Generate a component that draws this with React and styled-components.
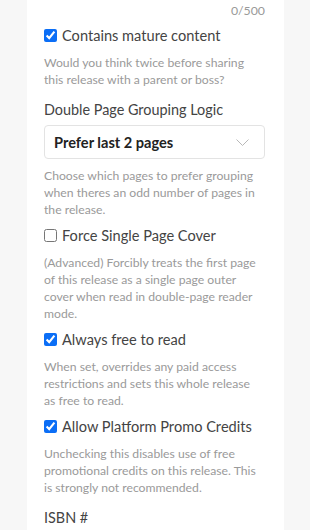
import React, { useState } from "react";
import styled, { createGlobalStyle } from "styled-components";

const GlobalStyle = createGlobalStyle`
  body {
    margin: 0;
    background: #f7f7f7;
    font-family: Lato, "Liberation Sans", sans-serif;
  }
`;

const options = [
  {
    id: "mature",
    label: "Contains mature content",
    checked: true,
    help: "Would you think twice before sharing this release with a parent or boss?",
  },
];

const afterSelect = [
  {
    id: "cover",
    label: "Force Single Page Cover",
    checked: false,
    help: "(Advanced) Forcibly treats the first page of this release as a single page outer cover when read in double-page reader mode.",
  },
  {
    id: "free",
    label: "Always free to read",
    checked: true,
    help: "When set, overrides any paid access restrictions and sets this whole release as free to read.",
  },
  {
    id: "promo",
    label: "Allow Platform Promo Credits",
    checked: true,
    help: "Unchecking this disables use of free promotional credits on this release. This is strongly not recommended.",
  },
];

function CheckOption({ label, help, defaultChecked }) {
  const [checked, setChecked] = useState(defaultChecked);
  return (
    <Group>
      <CheckRow>
        <CheckInput
          type="checkbox"
          checked={checked}
          onChange={() => setChecked(!checked)}
        />
        <CheckLabel>{label}</CheckLabel>
      </CheckRow>
      <Help>{help}</Help>
    </Group>
  );
}

export default function App() {
  return (
    <>
      <GlobalStyle />
      <Page>
        <Panel>
          <Counter>0/500</Counter>
          {options.map((o) => (
            <CheckOption
              key={o.id}
              label={o.label}
              help={o.help}
              defaultChecked={o.checked}
            />
          ))}
          <FieldLabel>Double Page Grouping Logic</FieldLabel>
          <SelectBox>
            <span>Prefer last 2 pages</span>
            <svg width="13" height="7" viewBox="0 0 13 7">
              <path d="M0.5 0.5l6 6 6-6" fill="none" stroke="#b8b8b8" strokeWidth="1" />
            </svg>
          </SelectBox>
          <Help>
            Choose which pages to prefer grouping when theres an odd number of
            pages in the release.
          </Help>
          {afterSelect.map((o) => (
            <CheckOption
              key={o.id}
              label={o.label}
              help={o.help}
              defaultChecked={o.checked}
            />
          ))}
          <FieldLabel>ISBN #</FieldLabel>
        </Panel>
      </Page>
    </>
  );
}

const Page = styled.div`
  height: 530px;
  overflow: hidden;
  padding: 0 26px 0 27px;
`;

const Panel = styled.div`
  background: #fff;
  height: 100%;
  padding: 3px 19px 0 17px;
  box-sizing: border-box;
`;

const Counter = styled.div`
  text-align: right;
  color: #999;
  font-size: 12.3px;
  line-height: 15px;
`;

const Group = styled.div`
  margin-top: 6px;
`;

const CheckRow = styled.label`
  display: flex;
  align-items: center;
  gap: 5px;
  height: 22px;
`;

const CheckInput = styled.input`
  width: 13px;
  height: 13px;
  margin: 0;
  accent-color: #0b6ef6;
`;

const CheckLabel = styled.span`
  font-size: 14.6px;
  color: #444;
`;

const Help = styled.p`
  margin: 8px 0 0;
  padding-right: 4px;
  font-size: 12.2px;
  line-height: 17px;
  color: #9a9a9a;
`;

const FieldLabel = styled.div`
  margin-top: 13px;
  font-size: 14.4px;
  line-height: 18px;
  color: #444;
`;

const SelectBox = styled.div`
  margin-top: 6px;
  height: 34px;
  box-sizing: border-box;
  border: 1px solid #e3e3e3;
  border-radius: 4px;
  display: flex;
  align-items: center;
  justify-content: space-between;
  padding: 0 15px 0 9px;
  font-size: 14.6px;
  font-weight: 700;
  color: #222;
`;
